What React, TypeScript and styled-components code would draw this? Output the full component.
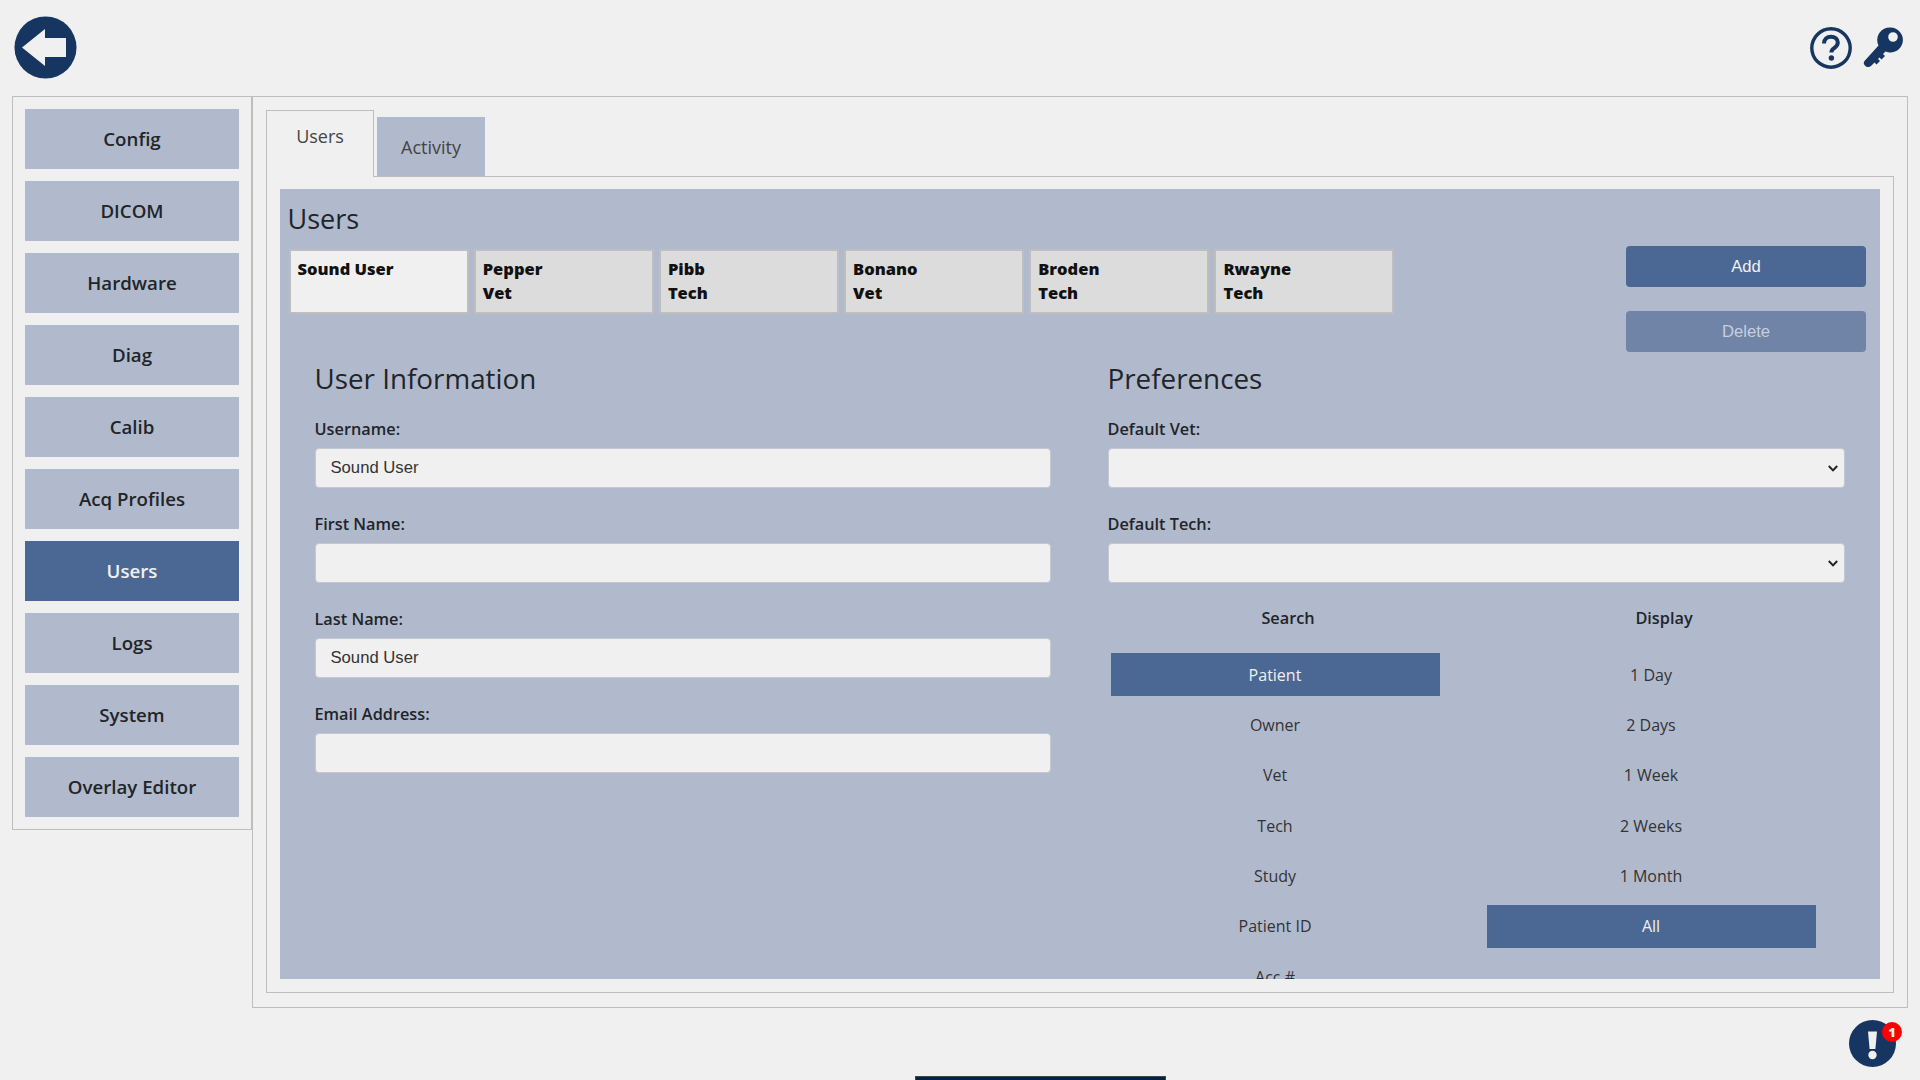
import React from "react";
import styled, { createGlobalStyle } from "styled-components";

const UI = `"Open Sans", "Noto Sans", sans-serif`;
const ARIAL = `"Liberation Sans", Arial, sans-serif`;
const NAVY = "#163560";
const ACTIVE = "#4b6894";
const SOFT = "#b1bacd";
const LINE = "#bebebe";

const Global = createGlobalStyle`
  html, body { margin: 0; padding: 0; background: #f0f0f0; }
  * { box-sizing: border-box; }
`;

const Page = styled.div`
  position: relative;
  width: 1920px;
  height: 1080px;
  overflow: hidden;
  background: #f0f0f0;
  font-family: ${UI};
  color: #212529;
`;
const Header = styled.header`
  height: 96px;
  padding: 16px 14px 0 14px;
  display: flex;
  justify-content: space-between;
  align-items: flex-start;
`;
const HeaderIcons = styled.div`
  display: flex;
  gap: 11px;
  padding: 11px 0 0 0;
  margin-right: 1px;
`;
const Body = styled.div`
  display: flex;
  align-items: flex-start;
  padding: 0 12px;
`;
const Sidebar = styled.nav`
  width: 240px;
  flex: none;
  padding: 12px;
  border: 1.5px solid ${LINE};
  display: flex;
  flex-direction: column;
  gap: 12px;
`;
const SideButton = styled.div<{ $active?: boolean }>`
  height: 60px;
  padding-bottom: 2px;
  display: flex;
  align-items: center;
  justify-content: center;
  background: ${(p) => (p.$active ? ACTIVE : SOFT)};
  color: ${(p) => (p.$active ? "#f0f0f0" : "#212529")};
  font-size: 18.7px;
  font-weight: 600;
`;
const Main = styled.main`
  width: 1656px;
  height: 912px;
  padding: 13px;
  border: 1.5px solid ${LINE};
`;
const TabRow = styled.div`
  display: flex;
  align-items: flex-end;
  gap: 3px;
  height: 67px;
  margin-bottom: -1.5px;
  position: relative;
  z-index: 1;
`;
const ActiveTab = styled.div`
  width: 108px;
  height: 67px;
  padding-top: 13px;
  text-align: center;
  font-size: 18px;
  color: #444;
  background: #f0f0f0;
  border: 1.5px solid ${LINE};
  border-bottom: none;
`;
const Tab = styled.div`
  width: 108px;
  height: 60px;
  padding-top: 17.5px;
  text-align: center;
  font-size: 18px;
  color: #444;
  background: ${SOFT};
  border-bottom: 1.5px solid ${LINE};
`;
const TabBody = styled.div`
  width: 1628px;
  height: 817px;
  padding: 12.5px 13px 12.5px 12.5px;
  border: 1.5px solid ${LINE};
`;
const Panel = styled.section`
  position: relative;
  height: 790px;
  background: ${SOFT};
  overflow: hidden;
  padding: 12px 0 0 0;
  display: flex;
  flex-direction: column;
`;
const PanelTitle = styled.h2`
  margin: 0 0 0 8px;
  height: 36px;
  font-size: 27px;
  line-height: 36px;
  font-weight: 400;
  color: #212529;
`;
const UserBar = styled.div`
  display: flex;
  gap: 5.2px;
  padding: 12px 0 0 9px;
`;
const UserCard = styled.div<{ $active?: boolean }>`
  width: 180px;
  height: 65px;
  padding: 6px 7px;
  border: 2px solid ${LINE};
  background: ${(p) => (p.$active ? "#f0f0f0" : "#dcdcdc")};
  font-size: 16.5px;
  line-height: 24px;
  font-weight: 800;
  color: #111;
`;
const Actions = styled.div`
  position: absolute;
  top: 57px;
  right: 14px;
  display: flex;
  flex-direction: column;
  gap: 24px;
`;
const ActionButton = styled.button<{ $disabled?: boolean }>`
  width: 240px;
  height: 41px;
  border: none;
  border-radius: 4px;
  background: ${(p) => (p.$disabled ? "#6f84a7" : ACTIVE)};
  color: ${(p) => (p.$disabled ? "#c6cfdd" : "#f0f0f0")};
  font-family: ${ARIAL};
  font-size: 16.67px;
  padding: 0;
`;
const Columns = styled.div`
  display: grid;
  grid-template-columns: 736px 737px;
  column-gap: 57px;
  padding: 43px 0 0 35px;
`;
const Column = styled.div`
  display: flex;
  flex-direction: column;
`;
const SectionTitle = styled.h3`
  margin: 0 0 18px;
  height: 42px;
  line-height: 42px;
  font-size: 27.8px;
  font-weight: 400;
  color: #212529;
`;
const Label = styled.label`
  height: 24px;
  line-height: 24px;
  margin-bottom: 7px;
  font-size: 16.3px;
  font-weight: 600;
  color: #212529;
`;
const InputBox = styled.div`
  height: 40px;
  margin-bottom: 24px;
  padding: 0 15px;
  display: flex;
  align-items: center;
  justify-content: space-between;
  background: #f0f0f0;
  border: 1px solid #c4c8d0;
  border-radius: 4px;
  font-family: ${ARIAL};
  font-size: 16.67px;
  color: #333;
`;
const Chevron = styled.svg`
  width: 10px;
  height: 7px;
  margin-right: -9px;
`;
const Choices = styled.div`
  display: grid;
  grid-template-columns: 361px 361px;
  column-gap: 15px;
  margin-top: -1px;
`;
const ChoiceHead = styled.div`
  height: 24px;
  line-height: 24px;
  text-align: center;
  font-size: 16.3px;
  font-weight: 600;
  margin-bottom: 23px;
`;
const ChoiceList = styled.div`
  display: flex;
  flex-direction: column;
  gap: 7.4px;
  padding-left: 3px;
`;
const Choice = styled.div<{ $active?: boolean }>`
  width: 329px;
  height: 43px;
  flex: none;
  display: flex;
  align-items: center;
  justify-content: center;
  font-size: 16px;
  background: ${(p) => (p.$active ? ACTIVE : "transparent")};
  color: ${(p) => (p.$active ? "#f0f0f0" : "#333")};
`;
const AlertWrap = styled.div`
  position: absolute;
  left: 1849px;
  top: 1020px;
  width: 47px;
  height: 47px;
  border-radius: 50%;
  background: ${NAVY};
`;
const Badge = styled.div`
  position: absolute;
  left: 33px;
  top: 2px;
  width: 20px;
  height: 20px;
  border-radius: 50%;
  background: #f00;
  color: #f0f0f0;
  font-size: 13px;
  font-weight: 800;
  line-height: 20px;
  text-align: center;
`;
const Drawer = styled.div`
  position: absolute;
  left: 915px;
  top: 1076px;
  width: 251px;
  height: 8px;
  background: #002244;
  border: 1px solid #444;
`;

const sideItems = ["Config", "DICOM", "Hardware", "Diag", "Calib", "Acq Profiles", "Users", "Logs", "System", "Overlay Editor"];
const users = [["Sound User"], ["Pepper", "Vet"], ["Pibb", "Tech"], ["Bonano", "Vet"], ["Broden", "Tech"], ["Rwayne", "Tech"]];
const search = ["Patient", "Owner", "Vet", "Tech", "Study", "Patient ID", "Acc #"];
const display = ["1 Day", "2 Days", "1 Week", "2 Weeks", "1 Month", "All"];

const Down = () => (
  <Chevron viewBox="0 0 10 7">
    <path d="M.8 1 5 5.4 9.2 1" fill="none" stroke="#222" strokeWidth="2" />
  </Chevron>
);

export default function App() {
  return (
    <Page>
      <Global />
      <Header>
        <svg width="63" height="63" viewBox="0 0 63 63">
          <circle cx="31.5" cy="31.5" r="31" fill={NAVY} />
          <path d="M8 31.5 31 13V22H52V41H31V50Z" fill="#f0f0f0" />
        </svg>
        <HeaderIcons>
          <svg width="42" height="42" viewBox="0 0 42 42">
            <circle cx="21" cy="21" r="19.2" fill="none" stroke={NAVY} strokeWidth="3.4" />
            <path d="M14 16.5c0-4.2 3-6.8 7-6.8 3.9 0 6.8 2.4 6.8 5.8 0 3-1.9 4.3-3.7 5.6-1.6 1.1-2.7 2-2.7 4.3" fill="none" stroke={NAVY} strokeWidth="4" />
            <circle cx="21.4" cy="31" r="2.7" fill={NAVY} />
          </svg>
          <svg width="42" height="42" viewBox="0 0 42 42">
            <path fillRule="evenodd" fill={NAVY} d="M27.5 .5A12.5 12.5 0 1 1 22.5 24.5L20 27l2 2-3.5 3.5-2-2-1.5 1.5 2 2-3.5 3.5-2-2-3 3Q6 41 3 39.5L1.5 38Q0 36 1.5 34L15.5 18.5A12.5 12.5 0 0 1 27.5 .5ZM30 5.2a4.8 4.8 0 1 0 0 9.6 4.8 4.8 0 0 0 0-9.6Z" />
          </svg>
        </HeaderIcons>
      </Header>
      <Body>
        <Sidebar>
          {sideItems.map((s) => (
            <SideButton key={s} $active={s === "Users"}>{s}</SideButton>
          ))}
        </Sidebar>
        <Main>
          <TabRow>
            <ActiveTab>Users</ActiveTab>
            <Tab>Activity</Tab>
          </TabRow>
          <TabBody>
            <Panel>
              <PanelTitle>Users</PanelTitle>
              <UserBar>
                {users.map((u, i) => (
                  <UserCard key={u[0]} $active={i === 0}>
                    {u[0]}
                    {u[1] && <br />}
                    {u[1]}
                  </UserCard>
                ))}
              </UserBar>
              <Actions>
                <ActionButton>Add</ActionButton>
                <ActionButton $disabled>Delete</ActionButton>
              </Actions>
              <Columns>
                <Column>
                  <SectionTitle>User Information</SectionTitle>
                  <Label>Username:</Label>
                  <InputBox>Sound User</InputBox>
                  <Label>First Name:</Label>
                  <InputBox />
                  <Label>Last Name:</Label>
                  <InputBox>Sound User</InputBox>
                  <Label>Email Address:</Label>
                  <InputBox />
                </Column>
                <Column>
                  <SectionTitle>Preferences</SectionTitle>
                  <Label>Default Vet:</Label>
                  <InputBox><span /><Down /></InputBox>
                  <Label>Default Tech:</Label>
                  <InputBox><span /><Down /></InputBox>
                  <Choices>
                    <div>
                      <ChoiceHead>Search</ChoiceHead>
                      <ChoiceList>
                        {search.map((s) => (
                          <Choice key={s} $active={s === "Patient"}>{s}</Choice>
                        ))}
                      </ChoiceList>
                    </div>
                    <div>
                      <ChoiceHead>Display</ChoiceHead>
                      <ChoiceList>
                        {display.map((s) => (
                          <Choice key={s} $active={s === "All"}>{s}</Choice>
                        ))}
                      </ChoiceList>
                    </div>
                  </Choices>
                </Column>
              </Columns>
            </Panel>
          </TabBody>
        </Main>
      </Body>
      <AlertWrap>
        <svg width="47" height="47" viewBox="0 0 47 47">
          <path d="M19 11.5h9l-1.6 17.5h-5.8Z" fill="#f0f0f0" />
          <circle cx="23.5" cy="35" r="4.2" fill="#f0f0f0" />
        </svg>
        <Badge>1</Badge>
      </AlertWrap>
      <Drawer />
    </Page>
  );
}
